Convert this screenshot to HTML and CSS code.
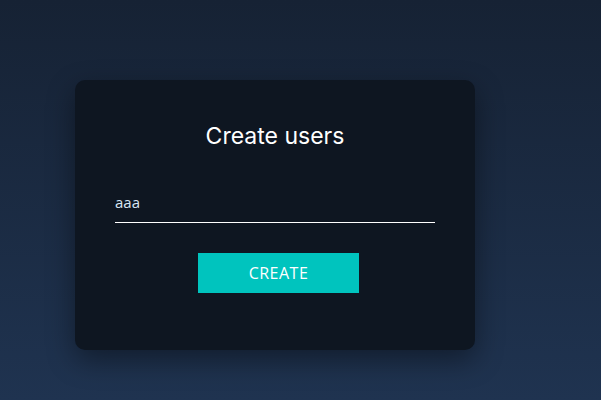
FILE: index.html
```html
<!DOCTYPE html>
<html>
<head>
<meta charset="utf-8">
<link rel="stylesheet" href="styles.css">
</head>
<body>
<div class="page">
  <div class="card">
    <h1 class="title">Create users</h1>
    <div class="field">
      <input class="input" type="text" value="aaa">
    </div>
    <button class="btn">CREATE</button>
  </div>
</div>
</body>
</html>
```
FILE: styles.css
```css
html, body {
  margin: 0;
  height: 100%;
}
body {
  background: linear-gradient(to bottom, #162234 0%, #1f3350 100%);
  font-family: "Open Sans", "Noto Sans", sans-serif;
}
.page {
  padding: 80px 0 0 75px;
}
.card {
  box-sizing: border-box;
  width: 400px;
  height: 270px;
  background: #0e1621;
  border-radius: 10px;
  box-shadow: 0 10px 28px rgba(0, 0, 0, 0.4);
  display: flex;
  flex-direction: column;
  align-items: center;
  padding: 40px 40px 0;
}
.title {
  margin: 0;
  font-family: "Inter", "Noto Sans", sans-serif;
  font-weight: 400;
  font-size: 23px;
  line-height: 32px;
  color: #ffffff;
}
.field {
  align-self: stretch;
  margin-top: 38px;
}
.input {
  box-sizing: border-box;
  width: 100%;
  background: transparent;
  border: 0;
  border-bottom: 1px solid #ffffff;
  outline: none;
  color: #d8e6f5;
  font-family: "Open Sans", "Noto Sans", sans-serif;
  font-size: 15px;
  padding: 0 0 8px 0;
  height: 33px;
}
.btn {
  margin-top: 30px;
  margin-left: 7px;
  width: 161px;
  height: 40px;
  border: 0;
  background: #00c4be;
  color: #ffffff;
  font-family: "Open Sans", "Noto Sans", sans-serif;
  font-size: 16px;
  letter-spacing: 0.5px;
}
```
